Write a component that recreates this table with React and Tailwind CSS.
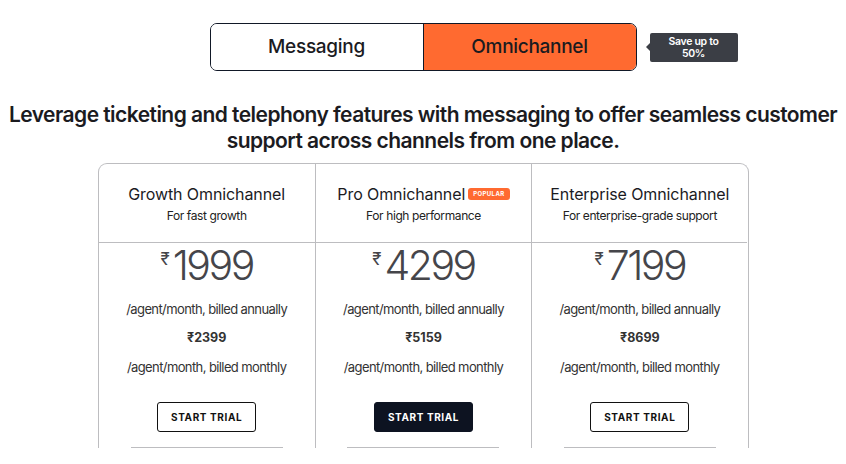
import React from "react";

const plans = [
  { name: "Growth Omnichannel", sub: "For fast growth", price: "1999", monthly: "2399" },
  { name: "Pro Omnichannel", sub: "For high performance", price: "4299", monthly: "5159", popular: true },
  { name: "Enterprise Omnichannel", sub: "For enterprise-grade support", price: "7199", monthly: "8699" },
];

const App = () => {
  return (
    <div className="w-[846px] h-[464px] overflow-hidden bg-white text-[#1b1b1f]" style={{ fontFamily: "Inter, 'Noto Sans', sans-serif" }}>
      {/* Toggle */}
      <div className="pt-[23px] flex justify-center">
        <div className="relative flex">
          <div className="flex w-[427px] h-[48px] border border-[#111827] rounded-[7px] overflow-hidden">
            <button className="flex-1 bg-white text-[19px] font-medium tracking-[-0.3px]">Messaging</button>
            <button className="flex-1 bg-[#ff6a30] border-l border-[#111827] text-[19px] font-medium tracking-[-0.3px]">Omnichannel</button>
          </div>
          {/* Save badge */}
          <div className="absolute left-[440px] top-[10px] w-[88px] h-[29px] bg-[#3b3e45] rounded-[2px] flex flex-col items-center justify-center text-center text-white text-[10.5px] font-semibold leading-[12px] tracking-[-0.3px]">
            <span className="absolute -left-[4px] top-[10px] w-0 h-0 border-y-[4px] border-y-transparent border-r-[4px] border-r-[#3b3e45]" />
            <span>Save up to</span>
            <span>50%</span>
          </div>
        </div>
      </div>

      {/* Heading */}
      <h2 className="mt-[31px] text-center text-[21px] font-semibold leading-[26px] tracking-[-0.55px]">
        Leverage ticketing and telephony features with messaging to offer seamless customer
        <br />
        support across channels from one place.
      </h2>

      {/* Plans table */}
      <div className="mt-[9px] mx-auto w-[651px] border border-b-0 border-[#bdbdc0] rounded-t-[9px] grid grid-cols-3">
        {plans.map((p, i) => (
          <div key={p.name} className={i > 0 ? "border-l border-[#bdbdc0]" : ""}>
            <div className="h-[79px] border-b border-[#bdbdc0] flex flex-col items-center pt-[20px]">
              <div className="flex items-center gap-[3px]">
                <span className="text-[16px] leading-[20px] tracking-[-0.1px]">{p.name}</span>
                {p.popular && (
                  <span className="bg-[#ff6a30] text-white text-[6px] font-bold tracking-[0.4px] px-[5px] py-[2px] rounded-[3px] leading-[8px] -mt-[1px]">
                    POPULAR
                  </span>
                )}
              </div>
              <div className="mt-[4px] text-[12px] leading-[16px] tracking-[-0.4px] text-[#222]">{p.sub}</div>
            </div>
            <div className="flex flex-col items-center">
              <div className="flex items-start text-[#45454a]">
                <span className="text-[17px] leading-[20px] mt-[6px] mr-[3px]">₹</span>
                <span className="text-[41px] font-light leading-[44px] tracking-[-2.5px]">{p.price}</span>
              </div>
              <div className="mt-[13px] text-[13px] leading-[18px] tracking-[-0.6px] text-[#333]">/agent/month, billed annually</div>
              <div className="mt-[11px] text-[12.5px] font-bold leading-[18px] text-[#333]">₹{p.monthly}</div>
              <div className="mt-[11px] text-[13px] leading-[18px] tracking-[-0.6px] text-[#333]">/agent/month, billed monthly</div>
              <button
                className={
                  "mt-[26px] w-[99px] h-[30px] rounded-[3px] text-[10px] font-bold tracking-[0.6px] border " +
                  (p.popular ? "bg-[#0d1321] text-white border-[#0d1321]" : "bg-white text-[#111] border-[#111]")
                }
              >
                START TRIAL
              </button>
              <div className="mt-[15px] w-[152px] h-px bg-[#bdbdc0]" />
            </div>
          </div>
        ))}
      </div>
    </div>
  );
};

export default App;
